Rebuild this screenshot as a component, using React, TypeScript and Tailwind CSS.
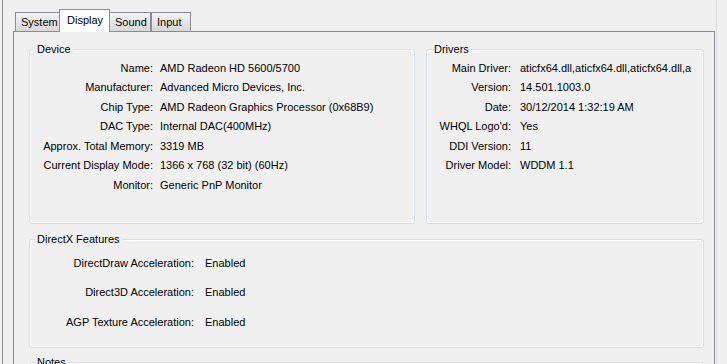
import type { ReactNode } from "react";

const device: [string, string][] = [
  ["Name:", "AMD Radeon HD 5600/5700"],
  ["Manufacturer:", "Advanced Micro Devices, Inc."],
  ["Chip Type:", "AMD Radeon Graphics Processor (0x68B9)"],
  ["DAC Type:", "Internal DAC(400MHz)"],
  ["Approx. Total Memory:", "3319 MB"],
  ["Current Display Mode:", "1366 x 768 (32 bit) (60Hz)"],
  ["Monitor:", "Generic PnP Monitor"],
];

const drivers: [string, string][] = [
  ["Main Driver:", "aticfx64.dll,aticfx64.dll,aticfx64.dll,a"],
  ["Version:", "14.501.1003.0"],
  ["Date:", "30/12/2014 1:32:19 AM"],
  ["WHQL Logo'd:", "Yes"],
  ["DDI Version:", "11"],
  ["Driver Model:", "WDDM 1.1"],
];

const features: [string, string][] = [
  ["DirectDraw Acceleration:", "Enabled"],
  ["Direct3D Acceleration:", "Enabled"],
  ["AGP Texture Acceleration:", "Enabled"],
];

function Group({ title, className, children }: { title: string; className: string; children?: ReactNode }) {
  return (
    <div className={"relative border border-[#d5dfe5] rounded-[3px] shadow-[inset_1px_1px_0_#ffffff,inset_-1px_-1px_0_#ffffff] " + className}>
      <div className="absolute -top-[8px] left-[5px] px-[2px] bg-[#f0f0f0] leading-[14px]">{title}</div>
      {children}
    </div>
  );
}

function Tab({ label, active }: { label: string; active?: boolean }) {
  if (active)
    return (
      <div className="relative z-10 -ml-px -mb-px h-[23px] w-[51px] border border-b-0 border-[#898c95] bg-white pl-[7px] pt-[3px] leading-[14px]">
        {label}
      </div>
    );
  return (
    <div className="h-[19px] border border-b-0 border-[#898c95] bg-linear-to-b from-[#f4f4f4] to-[#d8d8d8] pl-[5px] pt-[2px] leading-[14px]">
      {label}
    </div>
  );
}

export default function App() {
  return (
    <div className="w-[727px] h-[364px] overflow-hidden bg-[#f0f0f0] flex text-[11px] text-black font-['Liberation_Sans',Arial,sans-serif]">
      <div className="w-[2px]" />
      <div className="w-px bg-[#8d8d8d]" />
      <div className="w-[10px]" />
      <div className="w-[702px] flex flex-col pt-[10px]">
        <div className="flex items-end h-[21px] pl-[2px]">
          <div className="w-[45px]"><Tab label="System" /></div>
          <Tab label="Display" active />
          <div className="w-[42px] -ml-px"><Tab label="Sound" /></div>
          <div className="w-[40px]"><Tab label="Input" /></div>
        </div>
        <div className="flex-1 border border-[#898c95] pt-[17px] pl-[15px] pr-[10px]">
          <div className="flex gap-[11px]">
            <Group title="Device" className="w-[386px] h-[175px] pt-[8px]">
              {device.map(([k, v]) => (
                <div key={k} className="flex h-[19.5px] items-center gap-[7px]">
                  <div className="w-[123px] text-right whitespace-nowrap">{k}</div>
                  <div className="whitespace-nowrap">{v}</div>
                </div>
              ))}
            </Group>
            <Group title="Drivers" className="w-[278px] h-[175px] pt-[8px]">
              {drivers.map(([k, v]) => (
                <div key={k} className="flex h-[19.5px] items-center gap-[9px]">
                  <div className="w-[84px] shrink-0 text-right whitespace-nowrap">{k}</div>
                  <div className="whitespace-nowrap">{v}</div>
                </div>
              ))}
            </Group>
          </div>
          <Group title="DirectX Features" className="mt-[15px] h-[109px] pt-[8px]">
            {features.map(([k, v]) => (
              <div key={k} className="flex h-[29.5px] items-center gap-[11px]">
                <div className="w-[164px] text-right whitespace-nowrap">{k}</div>
                <div>{v}</div>
              </div>
            ))}
          </Group>
          <Group title="Notes" className="mt-[14px] h-[80px]" />
        </div>
      </div>
      <div className="w-px" />
      <div className="w-px bg-[#dcdcdc]" />
    </div>
  );
}
